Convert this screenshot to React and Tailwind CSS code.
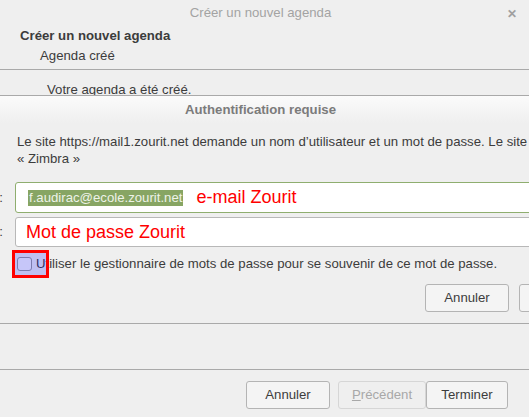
import React from 'react';

const font = { fontFamily: '"Liberation Sans", Arial, sans-serif' };

const GtkButton = ({ children, className = '', disabled = false }) => (
  <button
    type="button"
    className={`h-[28px] rounded-[3px] border text-[13.2px] flex items-center justify-center ${
      disabled ? 'border-[#d6d6d6] bg-[#efefef] text-[#a8a8a8]' : 'border-[#b4b4b4] bg-[#f4f4f4] text-[#3c3c3c]'
    } ${className}`}
  >
    {children}
  </button>
);

const AuthDialog = () => (
  <div className="absolute left-[-124px] right-[-116px] top-[95px] h-[229px] border-t border-b border-[#a9a9a9] bg-[#efefef]">
    <div className="h-[27px] bg-gradient-to-b from-[#fbfbfb] to-[#efefef] flex items-center justify-center">
      <span className="text-[13.2px] font-bold text-[#7b7b7b]">Authentification requise</span>
    </div>

    <div className="pl-[141px] pt-[10px] text-[13.2px] leading-[17px] text-[#3c3c3c] whitespace-nowrap">
      <p>Le site https://mail1.zourit.net demande un nom d’utilisateur et un mot de passe. Le site indique :</p>
      <p>« Zimbra »</p>
    </div>

    <div className="mt-[15px] pl-[104px] flex flex-col gap-[4px]">
      <div className="flex items-center">
        <span className="w-[35px] text-right pr-[12px] text-[13.2px] text-[#3c3c3c]">:</span>
        <div className="flex-1 h-[31px] rounded-[3px] border border-[#8fae6f] bg-white flex items-center pl-[12px]">
          <span className="bg-[#87a563] text-[#eef3e8] text-[13.2px] leading-[16px] px-[1px]">f.audirac@ecole.zourit.net</span>
          <span className="ml-[13px] text-[18px] text-[#ff0000]">e-mail Zourit</span>
        </div>
      </div>
      <div className="flex items-center">
        <span className="w-[35px] text-right pr-[12px] text-[13.2px] text-[#3c3c3c]">:</span>
        <div className="flex-1 h-[30px] rounded-[3px] border border-[#b8b8b8] bg-white flex items-center pl-[10px]">
          <span className="text-[18px] text-[#ff0000]">Mot de passe Zourit</span>
        </div>
      </div>
    </div>

    <div className="mt-[3px] ml-[136px] flex items-center h-[28px]">
      <div className="relative flex items-center h-full">
        <span className="ml-[5px] w-[15px] h-[14px] rounded-[3px] border border-[#9a9a9a] bg-[#f8f8f8]" />
        <span className="ml-[4px] text-[13.2px] text-[#3c3c3c] whitespace-nowrap">
          Utiliser le gestionnaire de mots de passe pour se souvenir de ce mot de passe.
        </span>
        <span className="absolute left-0 top-0 w-[37px] h-[28px] border-[3px] border-[#ff0000] bg-[#0000ff]/20" />
      </div>
    </div>

    <div className="mt-[6px] flex justify-end gap-[10px] pr-[42px]">
      <GtkButton className="w-[84px]">Annuler</GtkButton>
      <GtkButton className="w-[84px]">OK</GtkButton>
    </div>
  </div>
);

export default function App() {
  return (
    <div className="relative w-[529px] h-[417px] overflow-hidden bg-[#efefef] text-[#3c3c3c]" style={font}>
      <div className="flex flex-col h-full">
        <div className="relative h-[26px] flex items-center justify-center pr-[8px]">
          <span className="text-[13.2px] text-[#a3a3a3]">Créer un nouvel agenda</span>
          <span className="absolute left-[507px] top-[5px] text-[12px] font-bold text-[#a0a0a0]">✕</span>
        </div>

        <div className="pl-[20px] pt-[1px] text-[13.2px]">
          <div className="font-bold leading-[18px]">Créer un nouvel agenda</div>
          <div className="pl-[20px] mt-[2px] leading-[18px]">Agenda créé</div>
        </div>

        <div className="mt-[4px] border-t border-[#a9a9a9]" />

        <div className="pl-[47px] pt-[11px] text-[13.2px] leading-[17px]">Votre agenda a été créé.</div>

        <div className="flex-1" />

        <div className="border-t border-[#a9a9a9]" />
        <div className="h-[47px] flex items-start justify-end pt-[11px] pr-[21px]">
          <GtkButton className="w-[84px] mr-[8px]">Annuler</GtkButton>
          <GtkButton className="w-[88px]" disabled>
            <span><span className="underline">P</span>récédent</span>
          </GtkButton>
          <GtkButton className="w-[82px]">Terminer</GtkButton>
        </div>
      </div>

      <AuthDialog />
    </div>
  );
}
